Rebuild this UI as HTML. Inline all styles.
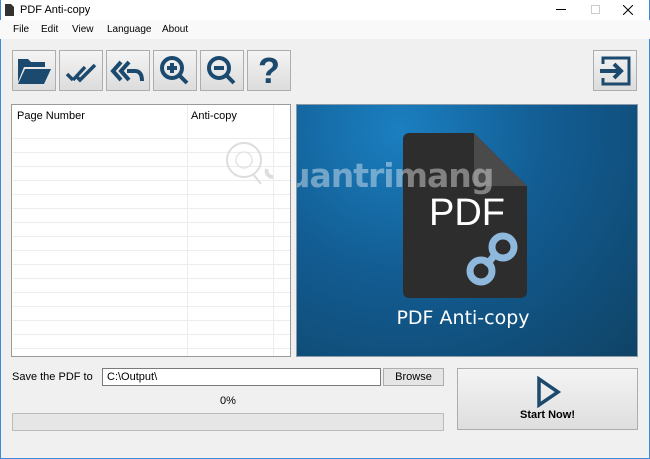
<!DOCTYPE html>
<html><head><style>
*{margin:0;padding:0;box-sizing:border-box}
body{width:650px;height:459px;overflow:hidden;background:#f0f0f0;font-family:"Liberation Sans",sans-serif;font-size:11px;color:#000;position:relative}
.a{position:absolute}
.btn{position:absolute;top:50px;width:44px;height:41px;border:1px solid #adadad;background:linear-gradient(#f4f4f4,#dcdcdc);display:flex;align-items:center;justify-content:center}
.row{position:absolute;left:1px;width:277px;height:1px;background:#ececec}
.m{position:absolute;top:24px;font-size:10px}
</style></head><body>
<div class="a" style="left:0;top:0;width:650px;height:20px;background:#fff"></div>
<div class="a" style="left:0;top:0;width:1px;height:459px;background:#3c8ad8"></div>
<div class="a" style="right:0;top:0;width:1px;height:459px;background:#3c8ad8"></div>
<div class="a" style="left:0;bottom:0;width:650px;height:1px;background:#3c8ad8"></div>
<svg class="a" style="left:5px;top:4px" width="9" height="12"><path d="M0 0h6l3 3v9H0z" fill="#333"/></svg>
<div class="a" style="left:20px;top:4px;font-size:11px">PDF Anti-copy</div>
<div class="a" style="left:556px;top:9px;width:10px;height:1px;background:#000"></div>
<div class="a" style="left:591px;top:5px;width:9px;height:9px;border:1px solid #ccc"></div>
<svg class="a" style="left:623px;top:5px" width="10" height="10"><path d="M0 0l10 10M10 0L0 10" stroke="#000" stroke-width="1"/></svg>
<div class="a" style="left:0;top:20px;width:650px;height:19px;background:#f9f9f9"></div>
<div class="m" style="left:13px">File</div>
<div class="m" style="left:41px">Edit</div>
<div class="m" style="left:72px">View</div>
<div class="m" style="left:107px">Language</div>
<div class="m" style="left:162px">About</div>

<div class="btn" style="left:12px"><svg width="36" height="30" viewBox="0 0 36 30"><path d="M2 3h10l3 3h14v5H8L2 26z" fill="#1b4a6e"/><path d="M9 13h26l-7 15H2z" fill="#1b4a6e"/></svg></div>
<div class="btn" style="left:59px"><svg width="36" height="30" viewBox="0 0 36 30"><path d="M4 18l6 6M10 24L22 11M13 20l4 4 15-15" stroke="#1b4a6e" stroke-width="3.5" fill="none"/></svg></div>
<div class="btn" style="left:106px"><svg width="36" height="30" viewBox="0 0 36 30"><path d="M11 6l-8 9 8 9M19 6l-8 9 8 9" stroke="#1b4a6e" stroke-width="4" fill="none"/><path d="M17 15h8c5 0 7 4 7 10" stroke="#1b4a6e" stroke-width="4" fill="none"/></svg></div>
<div class="btn" style="left:153px"><svg width="36" height="34" viewBox="0 0 36 34"><circle cx="15" cy="14" r="10" stroke="#1b4a6e" stroke-width="4" fill="none"/><path d="M10 14h10M15 9v10M22 21l8 8" stroke="#1b4a6e" stroke-width="4"/></svg></div>
<div class="btn" style="left:200px"><svg width="36" height="34" viewBox="0 0 36 34"><circle cx="15" cy="14" r="10" stroke="#1b4a6e" stroke-width="4" fill="none"/><path d="M10 14h10M22 21l8 8" stroke="#1b4a6e" stroke-width="4"/></svg></div>
<div class="btn" style="left:247px"><span style="font-size:36px;font-weight:bold;color:#1b4a6e;line-height:1">?</span></div>
<div class="btn" style="left:593px"><svg width="36" height="32" viewBox="0 0 36 32"><path d="M6 9V3h26v26H6v-6" stroke="#1b4a6e" stroke-width="3" fill="none"/><path d="M3 16h20M17 9l7 7-7 7" stroke="#1b4a6e" stroke-width="4" fill="none"/></svg></div>

<div class="a" style="left:11px;top:104px;width:280px;height:253px;background:#fff;border:1px solid #9a9a9a">
<div class="a" style="left:5px;top:5px">Page Number</div>
<div class="a" style="left:179px;top:5px">Anti-copy</div>
<div class="a" style="left:175px;top:0;width:1px;height:251px;background:#ececec"></div>
<div class="a" style="left:261px;top:0;width:1px;height:251px;background:#ececec"></div>
<div class="row" style="top:33px"></div><div class="row" style="top:47px"></div><div class="row" style="top:61px"></div><div class="row" style="top:75px"></div><div class="row" style="top:89px"></div><div class="row" style="top:103px"></div><div class="row" style="top:117px"></div><div class="row" style="top:131px"></div><div class="row" style="top:145px"></div><div class="row" style="top:159px"></div><div class="row" style="top:173px"></div><div class="row" style="top:187px"></div><div class="row" style="top:201px"></div><div class="row" style="top:215px"></div><div class="row" style="top:229px"></div><div class="row" style="top:243px"></div>
<svg class="a" style="left:211px;top:34px" width="50" height="50"><circle cx="21" cy="21" r="17" stroke="#ddd" stroke-width="2" fill="none"/><circle cx="21" cy="21" r="8" stroke="#e4e4e4" stroke-width="1.5" fill="none"/><path d="M30 35l8 10" stroke="#ddd" stroke-width="2"/><path d="M44 30a6 6 0 0 0 6 8" stroke="#ddd" stroke-width="4" fill="none"/></svg>
</div>

<div class="a" style="left:296px;top:104px;width:342px;height:253px;border:1px solid #8a9aa8;background:radial-gradient(ellipse at 30% 10%,#1b7fc0 0%,#125c92 45%,#0f4366 100%);overflow:hidden">
<svg class="a" style="left:0;top:0" width="340" height="251" viewBox="0 0 340 251">
<path d="M112 28h65l53 53v106a6 6 0 0 1-6 6H112a6 6 0 0 1-6-6V34a6 6 0 0 1 6-6z" fill="#2d2d2d"/>
<path d="M177 28l53 53h-53z" fill="#4a4a4a"/>
<text x="170" y="120" text-anchor="middle" fill="#fff" font-family="Liberation Sans,sans-serif" font-size="38">PDF</text>
<text x="-10" y="82" fill="#fff" fill-opacity="0.4" font-family="DejaVu Sans,sans-serif" font-weight="bold" font-size="33" letter-spacing="-1">uantrimang</text>
<circle cx="206" cy="142" r="11" stroke="#8fb9dc" stroke-width="7" fill="none"/>
<circle cx="184" cy="166" r="11" stroke="#8fb9dc" stroke-width="7" fill="none"/>
<path d="M200 147l-11 14" stroke="#8fb9dc" stroke-width="7"/>
<text x="166" y="219" text-anchor="middle" fill="#fff" font-family="DejaVu Sans,sans-serif" font-size="19">PDF Anti-copy</text>
</svg>
</div>

<div class="a" style="left:12px;top:371px;font-size:11px">Save the PDF to</div>
<div class="a" style="left:102px;top:368px;width:279px;height:18px;background:#fff;border:1px solid #7a7a7a;padding:2px 4px">C:\Output\</div>
<div class="a" style="left:383px;top:368px;width:61px;height:18px;border:1px solid #adadad;background:#e5e5e5;text-align:center;padding-top:2px">Browse</div>
<div class="a" style="left:220px;top:395px">0%</div>
<div class="a" style="left:12px;top:413px;width:432px;height:18px;border:1px solid #bcbcbc;background:#e6e6e6"></div>
<div class="a" style="left:457px;top:368px;width:181px;height:62px;border:1px solid #adadad;background:linear-gradient(#f4f4f4,#dedede)">
<svg class="a" style="left:78px;top:7px" width="26" height="32"><path d="M3 3l19 13L3 29z" stroke="#1b4a6e" stroke-width="3.5" fill="none"/></svg>
<div class="a" style="left:0;width:179px;top:40px;text-align:center;font-weight:bold">Start Now!</div>
</div>
</body></html>
